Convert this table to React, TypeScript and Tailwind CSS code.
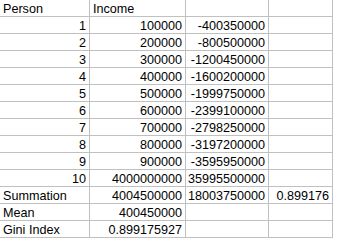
const rows: [string, string, string, string][] = [
  ["Person", "Income", "", ""],
  ["1", "100000", "-400350000", ""],
  ["2", "200000", "-800500000", ""],
  ["3", "300000", "-1200450000", ""],
  ["4", "400000", "-1600200000", ""],
  ["5", "500000", "-1999750000", ""],
  ["6", "600000", "-2399100000", ""],
  ["7", "700000", "-2798250000", ""],
  ["8", "800000", "-3197200000", ""],
  ["9", "900000", "-3595950000", ""],
  ["10", "4000000000", "35995500000", ""],
  ["Summation", "4004500000", "18003750000", "0.899176"],
  ["Mean", "400450000", "", ""],
  ["Gini Index", "0.899175927", "", ""],
];

// numbers sit on the right, labels on the left
const isNum = (s: string) => /^-?[0-9.]+$/.test(s);

export default function App() {
  return (
    <div className="w-[338px] h-[248px] bg-white overflow-hidden">
      <div
        className="grid grid-cols-[90px_96px_83px_64px] text-[12.6px] text-black leading-[16px]"
        style={{ fontFamily: '"Liberation Sans", Arial, sans-serif' }}
      >
        {rows.map((row, r) =>
          row.map((cell, c) => (
            <div
              key={`${r}-${c}`}
              className={`h-[17px] border-r border-b border-[#c0c0c0] pt-[1px] whitespace-nowrap overflow-hidden ${
                isNum(cell) ? "text-right pr-[3px]" : "text-left pl-[3px]"
              }`}
            >
              {cell}
            </div>
          ))
        )}
      </div>
    </div>
  );
}
